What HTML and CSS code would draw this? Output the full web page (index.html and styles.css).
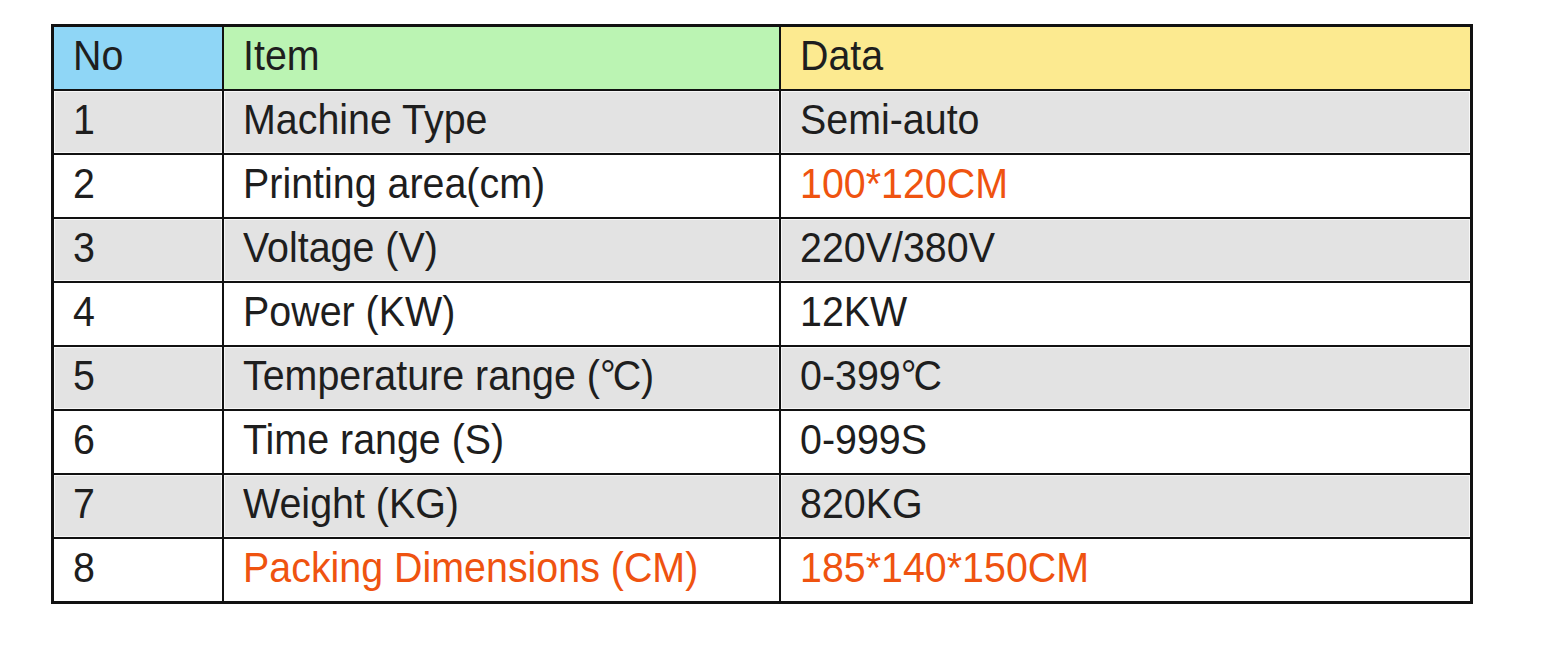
FILE: index.html
```html
<!DOCTYPE html>
<html lang="en">
<head>
<meta charset="utf-8">
<title>Specifications</title>
<link rel="stylesheet" href="styles.css">
</head>
<body>
<div class="page">
  <div class="spec-table">
    <div class="cell head head-no"><span class="t">No</span></div>
    <div class="cell head head-item"><span class="t">Item</span></div>
    <div class="cell head head-data"><span class="t">Data</span></div>

    <div class="cell grey"><span class="t">1</span></div>
    <div class="cell grey"><span class="t">Machine Type</span></div>
    <div class="cell grey"><span class="t">Semi-auto</span></div>

    <div class="cell"><span class="t">2</span></div>
    <div class="cell"><span class="t">Printing area(cm)</span></div>
    <div class="cell"><span class="t accent">100*120CM</span></div>

    <div class="cell grey"><span class="t">3</span></div>
    <div class="cell grey"><span class="t">Voltage (V)</span></div>
    <div class="cell grey"><span class="t">220V/380V</span></div>

    <div class="cell"><span class="t">4</span></div>
    <div class="cell"><span class="t">Power (KW)</span></div>
    <div class="cell"><span class="t">12KW</span></div>

    <div class="cell grey"><span class="t">5</span></div>
    <div class="cell grey"><span class="t">Temperature range (<span class="deg">°</span>C)</span></div>
    <div class="cell grey"><span class="t">0-399<span class="deg">°</span>C</span></div>

    <div class="cell"><span class="t">6</span></div>
    <div class="cell"><span class="t">Time range (S)</span></div>
    <div class="cell"><span class="t">0-999S</span></div>

    <div class="cell grey"><span class="t">7</span></div>
    <div class="cell grey"><span class="t">Weight (KG)</span></div>
    <div class="cell grey"><span class="t">820KG</span></div>

    <div class="cell"><span class="t">8</span></div>
    <div class="cell"><span class="t accent">Packing Dimensions (CM)</span></div>
    <div class="cell"><span class="t accent">185*140*150CM</span></div>
  </div>
</div>
</body>
</html>
```

FILE: styles.css
```css
* { box-sizing: border-box; }

html, body {
  margin: 0;
  padding: 0;
  background: #ffffff;
}

body {
  font-family: "Liberation Sans", Arial, sans-serif;
  color: #1e1e1e;
}

.page {
  padding: 24px 0 0 51px;
}

.spec-table {
  display: grid;
  width: 1422px;
  grid-template-columns: 168px 555px 689px;
  grid-auto-rows: 62px;
  gap: 2px;
  padding: 3px;
  background: #111111;
}

.cell {
  background: #ffffff;
  display: flex;
  align-items: center;
  padding-left: 19px;
  padding-bottom: 5px;
  overflow: hidden;
  white-space: nowrap;
}

.cell.grey {
  background: #e3e3e3;
  box-shadow: inset 0 0 0 1px #f7f7f7;
}

.head-no { background: #8fd6f6; }
.head-item { background: #bbf4b3; }
.head-data { background: #fcea90; }

.t {
  display: inline-block;
  font-size: 39.4px;
  line-height: 1;
  transform: scaleY(1.1);
  transform-origin: center;
}

.t.accent {
  color: #ef5310;
}

.deg {
  letter-spacing: -3px;
}
```
